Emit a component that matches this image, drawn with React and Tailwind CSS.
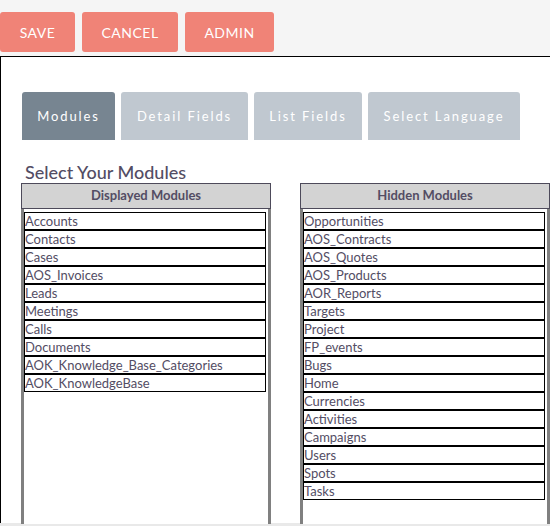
import React from "react";

const displayed = ["Accounts","Contacts","Cases","AOS_Invoices","Leads","Meetings","Calls","Documents","AOK_Knowledge_Base_Categories","AOK_KnowledgeBase"];
const hidden = ["Opportunities","AOS_Contracts","AOS_Quotes","AOS_Products","AOR_Reports","Targets","Project","FP_events","Bugs","Home","Currencies","Activities","Campaigns","Users","Spots","Tasks"];

function Column({ title, items }) {
  return (
    <div className="w-[250px] flex flex-col shrink-0">
      <div className="h-[26px] bg-[#d3d3d3] border border-[#4d4a5a] flex items-center justify-center text-[13px] font-bold text-[#534d64]">
        {title}
      </div>
      <div className="h-[315px] border-x-[3px] border-[#808080] bg-white pt-[3px] pr-[2px]">
        {items.map((it) => (
          <div key={it} className="h-[18px] border border-black flex items-center text-[13px] leading-none text-[#534d64] whitespace-nowrap">
            {it}
          </div>
        ))}
      </div>
    </div>
  );
}

export default function App() {
  const tabs = [
    { label: "Modules", w: "w-[93px]", active: true },
    { label: "Detail Fields", w: "w-[127px]" },
    { label: "List Fields", w: "w-[108px]" },
    { label: "Select Language", w: "w-[152px]" },
  ];
  return (
    <div className="w-[550px] h-[526px] overflow-hidden bg-[#e9e9e9]" style={{ fontFamily: "Lato, 'Open Sans', sans-serif" }}>
      <div className="h-[56px] bg-[#f5f5f5] flex items-start pt-[12px] gap-[7px]">
        <button className="h-[40px] w-[75px] rounded-[3px] bg-[#f08377] text-white text-[14px] tracking-[0.5px]">SAVE</button>
        <button className="h-[40px] w-[96px] rounded-[3px] bg-[#f08377] text-white text-[14px] tracking-[0.5px]">CANCEL</button>
        <button className="h-[40px] w-[89px] rounded-[3px] bg-[#f08377] text-white text-[14px] tracking-[0.5px]">ADMIN</button>
      </div>
      <div className="h-[467px] bg-white border-l border-t border-black pl-[20px] pt-[35px]">
        <div className="flex gap-[6px] pl-[1px]">
          {tabs.map((t) => (
            <div
              key={t.label}
              className={`${t.w} h-[48px] rounded-t-[3px] flex items-center justify-center pt-[1px] text-[13px] tracking-[1.9px] text-white ${t.active ? "bg-[#778591]" : "bg-[#c0c8d0]"}`}
            >
              {t.label}
            </div>
          ))}
        </div>
        <div className="mt-[21px] pl-[4px] h-[22px] text-[18px] leading-[22px] font-medium text-[#534d64]">Select Your Modules</div>
        <div className="flex gap-[29px]">
          <Column title="Displayed Modules" items={displayed} />
          <Column title="Hidden Modules" items={hidden} />
        </div>
      </div>
    </div>
  );
}
